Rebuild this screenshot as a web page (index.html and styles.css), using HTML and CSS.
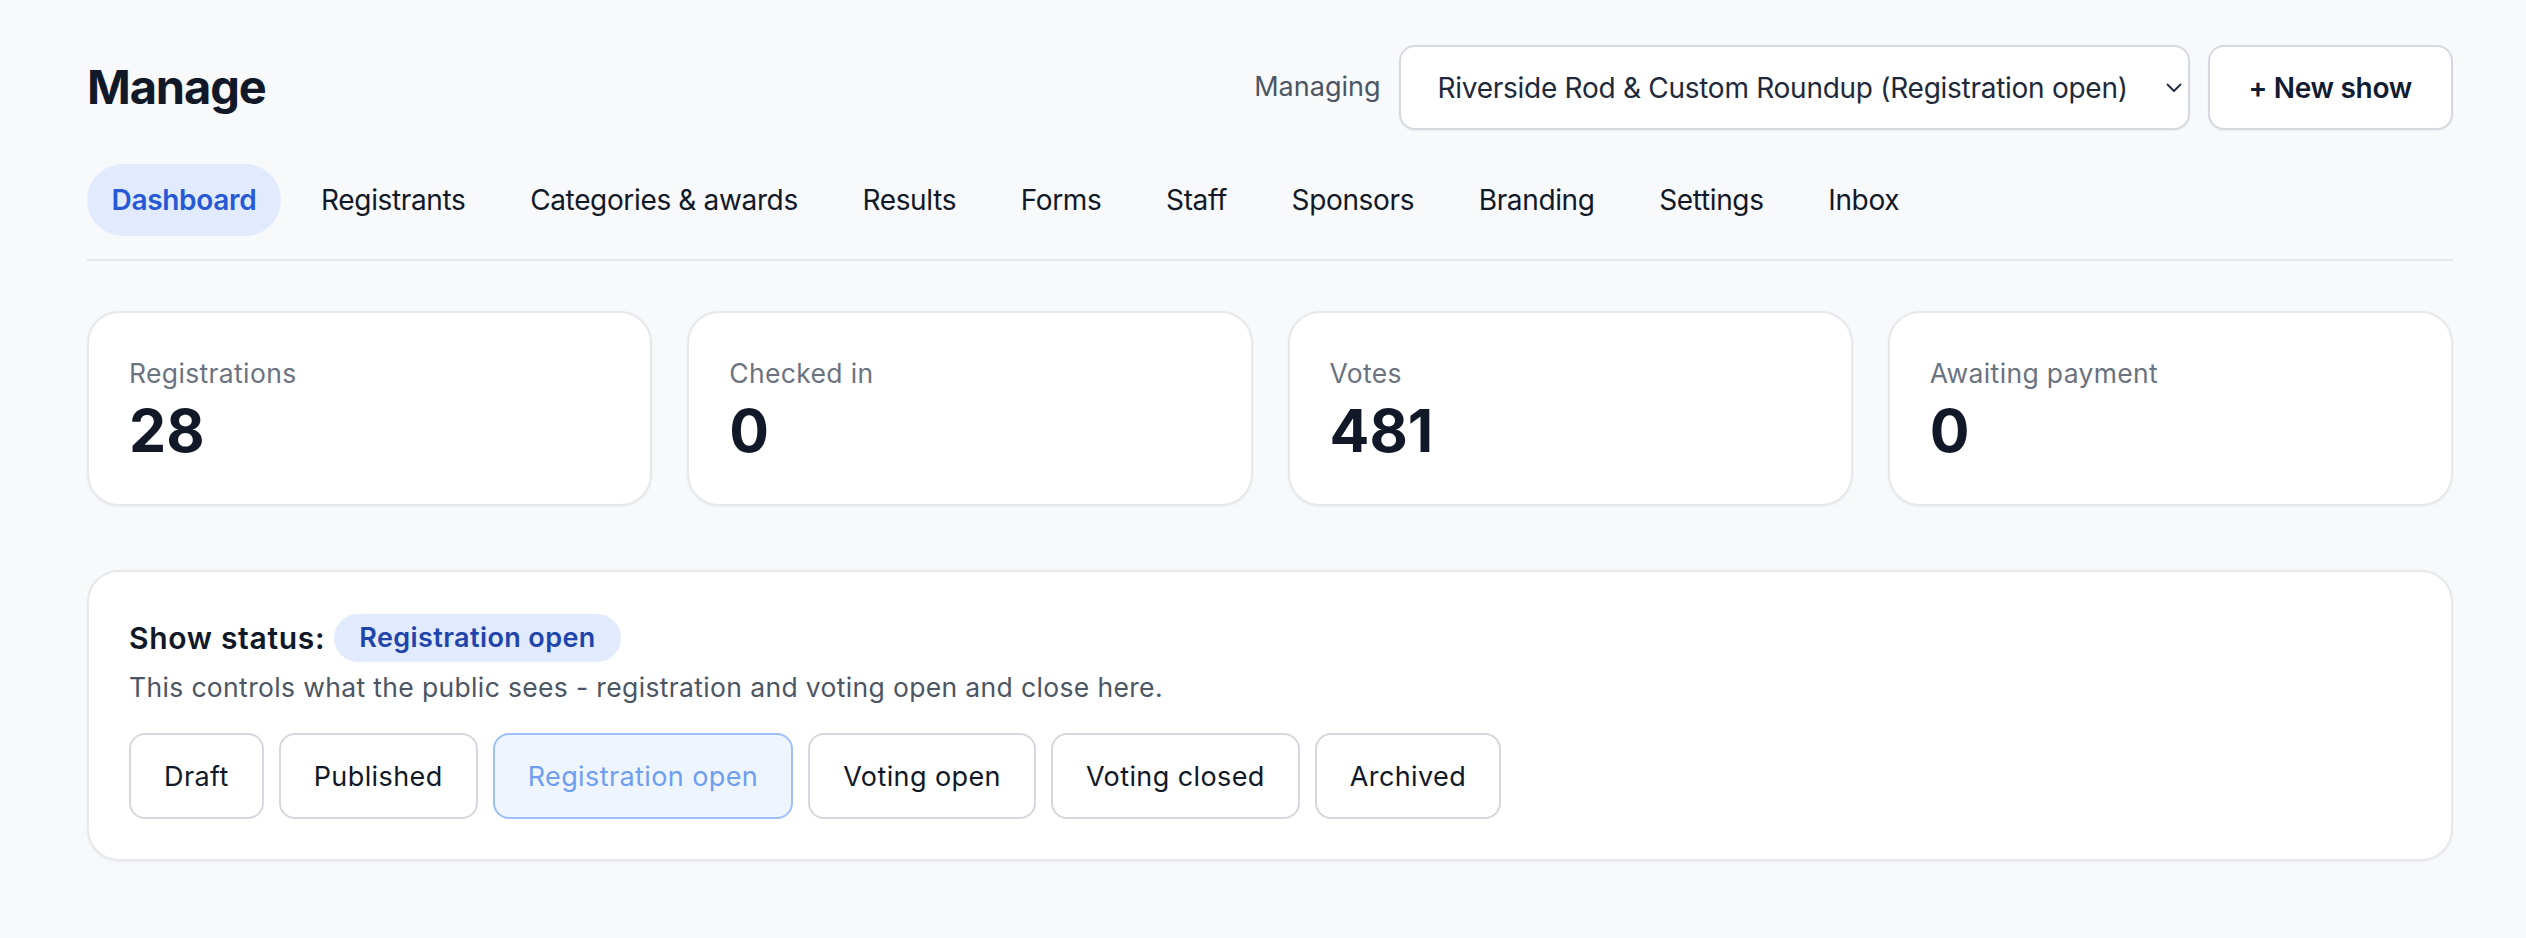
FILE: index.html
```html
<!DOCTYPE html>
<html lang="en">
<head>
<meta charset="utf-8">
<title>Manage</title>
<link rel="stylesheet" href="styles.css">
</head>
<body>
<div class="page">
  <header class="top">
    <h1 class="title">Manage</h1>
    <div class="controls">
      <span class="managing">Managing</span>
      <div class="select-wrap">
        <select class="show-select">
          <option>Riverside Rod &amp; Custom Roundup (Registration open)</option>
        </select>
        <svg class="chev" width="16" height="10" viewBox="0 0 16 10" aria-hidden="true"><path d="M1.5 1.5l6.5 6.5 6.5-6.5" fill="none" stroke="#1e293b" stroke-width="1.8" stroke-linecap="round" stroke-linejoin="round"/></svg>
      </div>
      <button class="btn-new">+ New show</button>
    </div>
  </header>

  <nav class="tabs">
    <a class="tab active">Dashboard</a>
    <a class="tab">Registrants</a>
    <a class="tab">Categories &amp; awards</a>
    <a class="tab">Results</a>
    <a class="tab">Forms</a>
    <a class="tab">Staff</a>
    <a class="tab">Sponsors</a>
    <a class="tab">Branding</a>
    <a class="tab">Settings</a>
    <a class="tab">Inbox</a>
  </nav>

  <section class="stats">
    <div class="stat">
      <div class="stat-label">Registrations</div>
      <div class="stat-value">28</div>
    </div>
    <div class="stat">
      <div class="stat-label">Checked in</div>
      <div class="stat-value">0</div>
    </div>
    <div class="stat">
      <div class="stat-label">Votes</div>
      <div class="stat-value">481</div>
    </div>
    <div class="stat">
      <div class="stat-label">Awaiting payment</div>
      <div class="stat-value">0</div>
    </div>
  </section>

  <section class="status-card">
    <div class="status-row">
      <span class="status-title">Show status:</span>
      <span class="badge">Registration open</span>
    </div>
    <p class="status-desc">This controls what the public sees - registration and voting open and close here.</p>
    <div class="status-buttons">
      <button class="sbtn">Draft</button>
      <button class="sbtn">Published</button>
      <button class="sbtn current">Registration open</button>
      <button class="sbtn">Voting open</button>
      <button class="sbtn">Voting closed</button>
      <button class="sbtn">Archived</button>
    </div>
  </section>
</div>
</body>
</html>
```

FILE: styles.css
```css
* { box-sizing: border-box; }

html, body {
  margin: 0;
  padding: 0;
  background: #f8f9fb;
}

body {
  font-family: Inter, "Noto Sans", "Liberation Sans", sans-serif;
  color: #111827;
  font-size: 26px;
  line-height: 1.5;
}

.page {
  padding: 45px 73px 60px 87px;
}

/* Header */
.top {
  display: flex;
  align-items: center;
  justify-content: space-between;
}

.title {
  margin: 0;
  font-size: 47px;
  font-weight: 700;
  line-height: 1.2;
  color: #111827;
  letter-spacing: -1.1px;
}

.controls {
  display: flex;
  align-items: center;
  gap: 18px;
}

.managing {
  font-size: 27px;
  color: #4b5563;
}

.select-wrap {
  position: relative;
  display: flex;
}

.show-select {
  appearance: none;
  -webkit-appearance: none;
  height: 85px;
  padding: 0 59px 0 37px;
  font-family: inherit;
  font-size: 28px;
  letter-spacing: -0.27px;
  color: #1e293b;
  background: #fff;
  border: 2px solid #d5d8de;
  border-radius: 16px;
  box-shadow: 0 1px 2px rgba(16, 24, 40, 0.06);
  outline: none;
}

.chev {
  position: absolute;
  right: 8px;
  top: 38px;
  width: 16px;
  height: 10px;
  pointer-events: none;
}

.btn-new {
  height: 85px;
  padding: 0 39px;
  font-family: inherit;
  font-size: 28px;
  font-weight: 600;
  letter-spacing: -0.3px;
  color: #111c33;
  background: #fff;
  border: 2px solid #d5d8de;
  border-radius: 16px;
  box-shadow: 0 1px 2px rgba(16, 24, 40, 0.06);
}

/* Tabs */
.tabs {
  display: flex;
  align-items: center;
  gap: 15.6px;
  margin-top: 34px;
  padding-bottom: 23px;
  border-bottom: 2px solid #e5e7eb;
}

.tab {
  display: block;
  height: 72px;
  line-height: 72px;
  padding: 0 24.5px;
  border-radius: 999px;
  font-size: 28px;
  letter-spacing: -0.35px;
  color: #111827;
  white-space: nowrap;
}

.tab.active {
  background: #e1ebfd;
  color: #2759d6;
  font-weight: 600;
  letter-spacing: -0.3px;
}

/* Stats */
.stats {
  display: grid;
  grid-template-columns: repeat(4, 1fr);
  gap: 35px;
  margin-top: 50px;
}

.stat {
  background: #fff;
  border: 2px solid #e6e8ec;
  border-radius: 32px;
  padding: 41px 40px 41px;
  box-shadow: 0 1px 3px rgba(16, 24, 40, 0.05);
}

.stat-label {
  font-size: 26.5px;
  letter-spacing: 0.35px;
  line-height: 39px;
  color: #6b7280;
}

.stat-value {
  margin-top: 6px;
  font-size: 59px;
  line-height: 64px;
  font-weight: 700;
  color: #111827;
}

/* Status card */
.status-card {
  margin-top: 64px;
  background: #fff;
  border: 2px solid #e6e8ec;
  border-radius: 32px;
  padding: 40px 40px 40px;
  box-shadow: 0 1px 3px rgba(16, 24, 40, 0.05);
}

.status-row {
  display: flex;
  align-items: center;
  gap: 9px;
  height: 52px;
}

.status-title {
  font-size: 30px;
  letter-spacing: 0.7px;
  font-weight: 600;
  color: #111827;
}

.badge {
  display: inline-flex;
  align-items: center;
  height: 48px;
  padding: 0 25px;
  border-radius: 999px;
  background: #e1ebfd;
  color: #1f45ad;
  font-size: 27px;
  letter-spacing: 0.4px;
  font-weight: 600;
}

.status-desc {
  margin: 4px 0 0;
  font-size: 26.5px;
  letter-spacing: 0.35px;
  line-height: 39px;
  color: #4b5563;
}

.status-buttons {
  display: flex;
  gap: 15px;
  margin-top: 26px;
}

.sbtn {
  height: 86px;
  padding: 0 33px;
  font-family: inherit;
  font-size: 27px;
  letter-spacing: 0.4px;
  color: #111827;
  background: #fff;
  border: 2px solid #d5d8de;
  border-radius: 16px;
  margin: 0;
}

.sbtn.current {
  background: #eff5ff;
  border-color: #9cc0f7;
  color: #6e9ef0;
}
```
